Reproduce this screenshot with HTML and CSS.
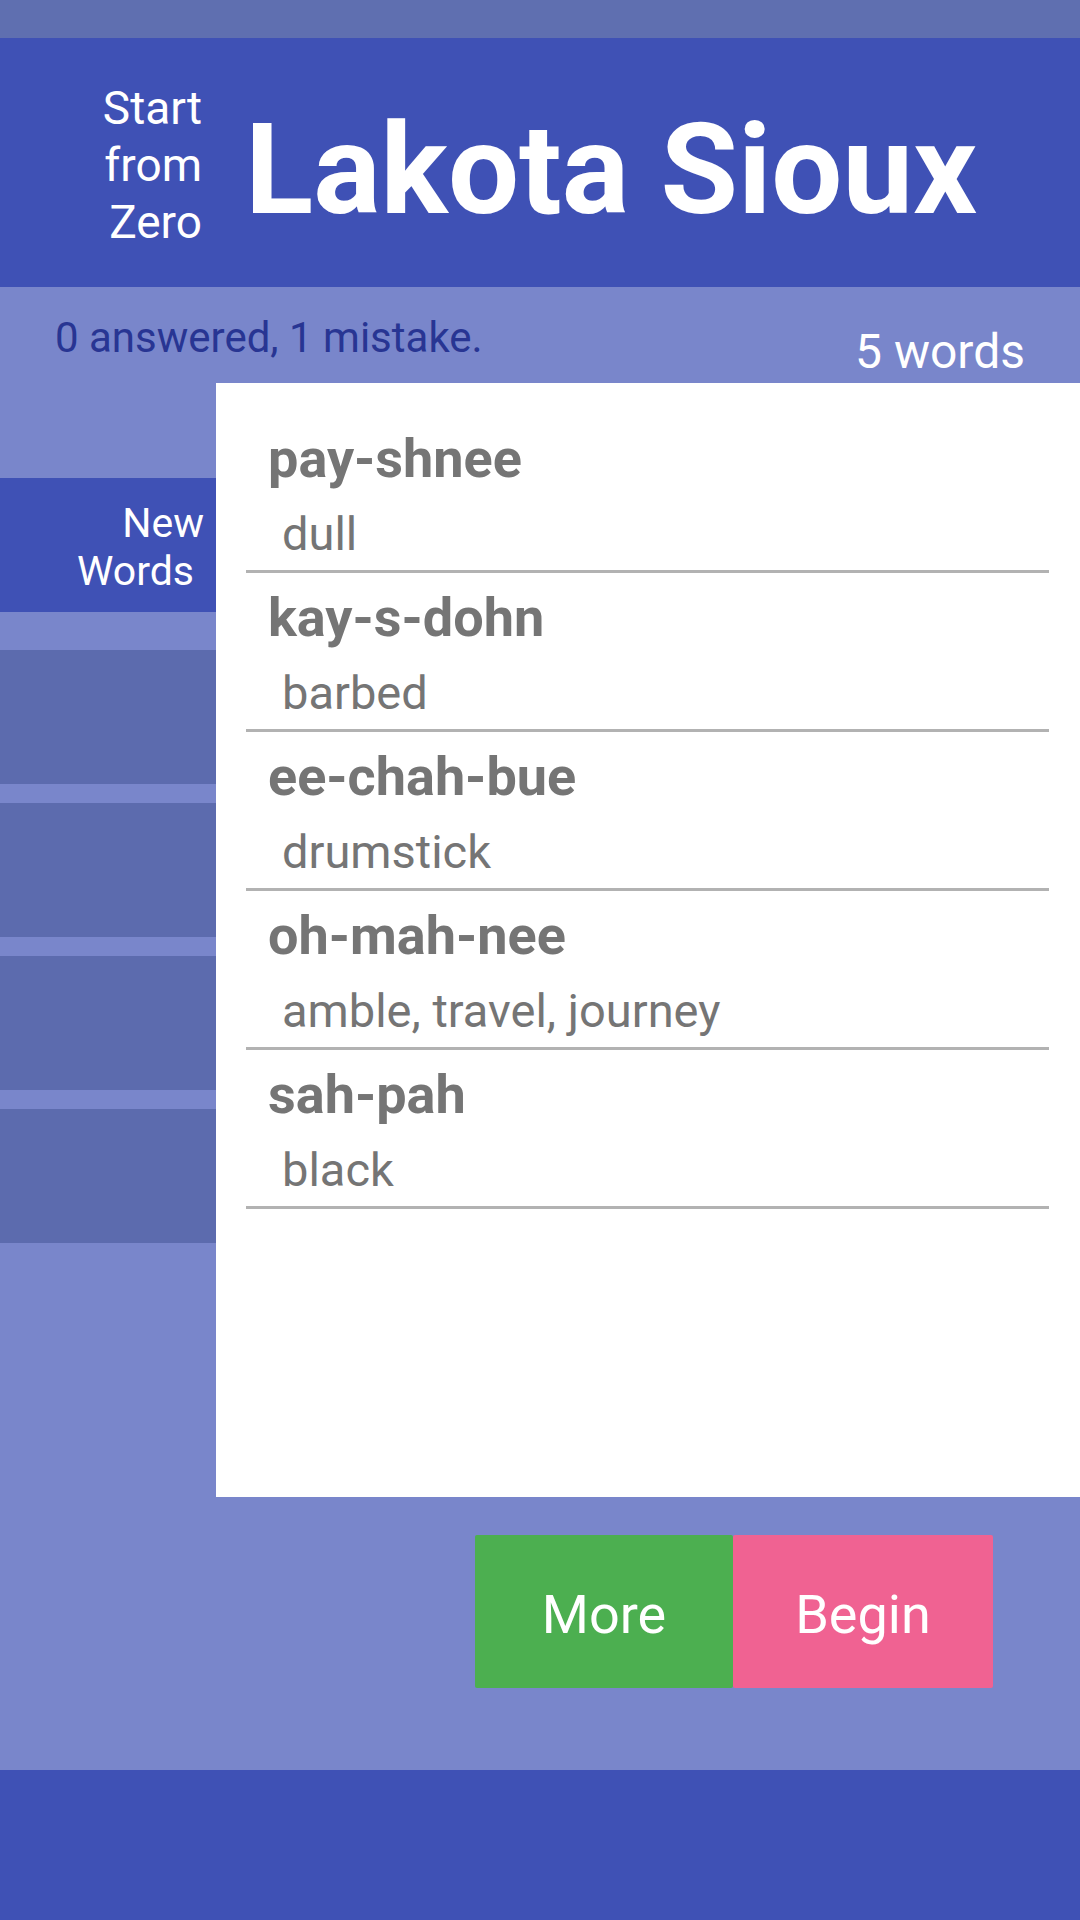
FILE: index.html
```html
<!DOCTYPE html>
<html lang="en">
<head>
<meta charset="utf-8">
<title>Lakota Sioux - Start from Zero</title>
<link rel="stylesheet" href="styles.css">
</head>
<body>
<div class="screen">
  <div class="statusbar"></div>
  <header class="header">
    <div class="brand-small">Start<br>from<br>Zero</div>
    <h1 class="title">Lakota Sioux</h1>
  </header>
  <main class="main">
    <div class="info">
      <div class="progress">0 answered, 1 mistake.</div>
      <div class="count">5 words</div>
    </div>
    <div class="content">
      <nav class="tabs">
        <div class="tab tab-active"><span class="tab-line">New</span><span class="tab-line tab-line2">Words</span></div>
        <div class="tab tab-first"></div>
        <div class="tab"></div>
        <div class="tab"></div>
        <div class="tab"></div>
      </nav>
      <section class="card">
        <ul class="word-list">
          <li class="word-row"><div class="word">pay-shnee</div><div class="meaning">dull</div></li>
          <li class="word-row"><div class="word">kay-s-dohn</div><div class="meaning">barbed</div></li>
          <li class="word-row"><div class="word">ee-chah-bue</div><div class="meaning">drumstick</div></li>
          <li class="word-row"><div class="word">oh-mah-nee</div><div class="meaning">amble, travel, journey</div></li>
          <li class="word-row"><div class="word">sah-pah</div><div class="meaning">black</div></li>
        </ul>
      </section>
    </div>
    <div class="actions">
      <button class="btn btn-more">More</button>
      <button class="btn btn-begin">Begin</button>
    </div>
  </main>
  <footer class="navbar"></footer>
</div>
</body>
</html>
```
FILE: styles.css
```css
* { box-sizing: border-box; }
html, body {
  margin: 0;
  padding: 0;
}
body {
  font-family: Roboto, "Noto Sans", "Liberation Sans", sans-serif;
  background: #7986cb;
}
.screen {
  width: 1080px;
  height: 1920px;
  display: flex;
  flex-direction: column;
  overflow: hidden;
}
.statusbar {
  height: 38px;
  background: #5f6fb0;
  flex: none;
}
.header {
  height: 249px;
  flex: none;
  background: #3f51b5;
  display: flex;
  align-items: flex-start;
  padding-left: 82px;
}
.brand-small {
  width: 120px;
  margin-top: 42px;
  text-align: right;
  color: #fff;
  font-size: 46px;
  line-height: 57px;
}
.title {
  margin: 69px 0 0 43px;
  color: #fff;
  font-size: 126px;
  line-height: 126px;
  font-weight: 700;
  white-space: nowrap;
}
.main {
  flex: 1;
  background: #7986cb;
  display: flex;
  flex-direction: column;
}
.info {
  height: 96px;
  display: flex;
  justify-content: space-between;
  align-items: flex-start;
  padding: 0 55px 0 55px;
}
.progress {
  margin-top: 26px;
  font-size: 42px;
  line-height: 50px;
  color: #283593;
}
.count {
  margin-top: 37px;
  font-size: 48px;
  line-height: 56px;
  color: #fff;
}
.content {
  display: flex;
  height: 1114px;
}
.tabs {
  width: 216px;
  flex: none;
  padding-top: 95px;
  display: flex;
  flex-direction: column;
  gap: 19px;
}
.tab {
  height: 134px;
  background: #5c6bae;
}
.tab-first { margin-top: 19px; }
.tab-active {
  background: #3f51b5;
  color: #fff;
  display: flex;
  flex-direction: column;
  align-items: flex-end;
  justify-content: center;
  padding-right: 12px;
  padding-top: 4px;
  font-size: 41px;
  line-height: 48px;
}
.tab-line2 { padding-right: 10px; }
.card {
  flex: 1;
  background: #fff;
  padding: 31px 31px 0 30px;
}
.word-list {
  list-style: none;
  margin: 0;
  padding: 0;
}
.word-row {
  padding: 13px 0 6px;
  border-bottom: 3px solid #b2b2b2;
}
.word {
  padding-left: 22px;
  font-size: 54px;
  line-height: 64px;
  font-weight: 700;
  color: #757575;
}
.meaning {
  margin-top: 13px;
  padding-left: 36px;
  font-size: 47px;
  line-height: 60px;
  color: #757575;
}
.actions {
  margin-top: 38px;
  display: flex;
  justify-content: flex-end;
  padding-right: 87px;
}
.btn {
  border: none;
  height: 153px;
  font-family: inherit;
  font-size: 54px;
  color: #fff;
  padding: 6px 0 0;
  border-radius: 2px;
}
.btn-more {
  width: 258px;
  background: #4caf50;
}
.btn-begin {
  width: 260px;
  background: #f06292;
}
.navbar {
  height: 150px;
  flex: none;
  background: #3f51b5;
}
```
